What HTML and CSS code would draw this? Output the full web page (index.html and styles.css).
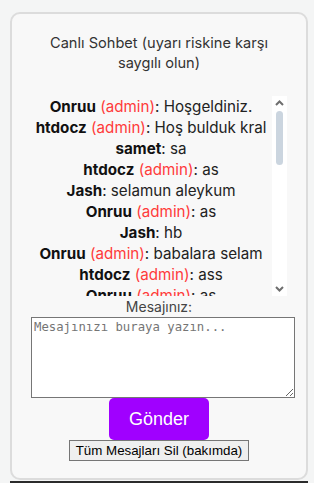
FILE: index.html
```html
<!DOCTYPE html>
<html lang="tr">
<head>
<meta charset="utf-8">
<title>Canlı Sohbet</title>
<link rel="stylesheet" href="styles.css">
</head>
<body>
<div class="card">
  <p class="title">Canlı Sohbet (uyarı riskine karşı saygılı olun)</p>
  <div class="chatbox">
    <div class="chat">
      <div class="msg"><b>Onruu</b> <span class="admin">(admin)</span>: Hoşgeldiniz.</div>
      <div class="msg"><b>htdocz</b> <span class="admin">(admin)</span>: Hoş bulduk kral</div>
      <div class="msg"><b>samet</b>: sa</div>
      <div class="msg"><b>htdocz</b> <span class="admin">(admin)</span>: as</div>
      <div class="msg"><b>Jash</b>: selamun aleykum</div>
      <div class="msg"><b>Onruu</b> <span class="admin">(admin)</span>: as</div>
      <div class="msg"><b>Jash</b>: hb</div>
      <div class="msg"><b>Onruu</b> <span class="admin">(admin)</span>: babalara selam</div>
      <div class="msg"><b>htdocz</b> <span class="admin">(admin)</span>: ass</div>
      <div class="msg"><b>Onruu</b> <span class="admin">(admin)</span>: as</div>
      <div class="msg"><b>samet</b>: naber</div>
      <div class="msg"><b>Jash</b>: iyi senden</div>
    </div>
    <div class="scrollbar" aria-hidden="true">
      <svg class="sb-btn" width="15" height="15" viewBox="0 0 15 15"><path d="M4 9 L7.5 5.5 L11 9" fill="none" stroke="#6e6e6e" stroke-width="2"/></svg>
      <div class="sb-track"><div class="sb-thumb"></div></div>
      <svg class="sb-btn" width="15" height="15" viewBox="0 0 15 15"><path d="M4 6 L7.5 9.5 L11 6" fill="none" stroke="#6e6e6e" stroke-width="2"/></svg>
    </div>
  </div>
  <label class="label" for="mesaj">Mesajınız:</label>
  <textarea id="mesaj" class="input" rows="5" placeholder="Mesajınızı buraya yazın..."></textarea>
  <button class="send" type="button">Gönder</button>
  <button class="clear" type="button">Tüm Mesajları Sil (bakımda)</button>
</div>
<div class="footer"></div>
</body>
</html>
```

FILE: styles.css
```css
html, body {
  margin: 0;
  background: #f4f5f5;
}
body {
  padding: 12px 6px 0 10px;
  font-family: Inter, "DejaVu Sans", sans-serif;
}
.card {
  background: #f8f8f8;
  border: 2px solid #dcdcdc;
  border-radius: 10px;
  padding: 19px 18px 17px;
  display: flex;
  flex-direction: column;
  align-items: center;
}
.title {
  margin: 0 0 23px;
  font-size: 14.6px;
  line-height: 20px;
  color: #333;
  text-align: center;
}
.chatbox {
  align-self: stretch;
  height: 200px;
  display: flex;
  margin-right: 1px;
}
.chat {
  flex: 1;
  min-width: 0;
  overflow: hidden;
  text-align: center;
  font-size: 15.2px;
  line-height: 21px;
  color: #222;
  white-space: nowrap;
}
.scrollbar {
  width: 15px;
  flex: none;
  background: #ffffff;
  display: flex;
  flex-direction: column;
}
.sb-btn {
  display: block;
  flex: none;
}
.sb-track {
  flex: 1;
  padding: 0 4px;
}
.sb-thumb {
  height: 54px;
  background: #cbd5df;
  border-radius: 4px;
}
.msg b {
  font-weight: 700;
  color: #111;
}
.admin {
  color: #ff3b3b;
}
.label {
  font-size: 14px;
  line-height: 21px;
  color: #444;
}
.input {
  align-self: flex-start;
  margin-left: 1px;
  width: 258px;
  height: 75px;
  padding: 2px;
  border: 1px solid #767676;
  font-family: "DejaVu Sans Mono", monospace;
  font-size: 12.3px;
  resize: both;
}
.send {
  width: 100px;
  height: 42px;
  border: none;
  border-radius: 5px;
  background: #a000ff;
  color: #fff;
  font-family: "Liberation Sans", Arial, sans-serif;
  font-size: 18px;
}
.clear {
  height: 21px;
  padding: 0 6px;
  border: 1px solid #767676;
  border-radius: 0;
  background: #efefef;
  color: #000;
  font-family: "Liberation Sans", Arial, sans-serif;
  font-size: 13.33px;
}
.footer {
  margin-top: 1px;
  height: 10px;
  background: #2b2b2b;
}
```
